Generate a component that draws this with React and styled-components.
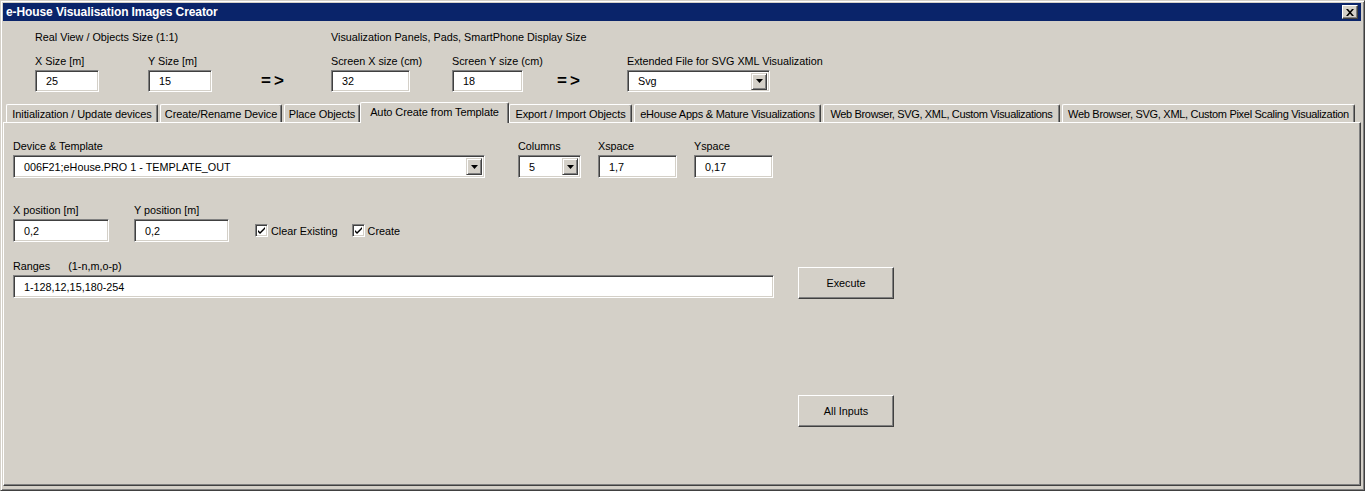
import React from 'react';
import styled, { createGlobalStyle } from 'styled-components';

const Global = createGlobalStyle`
	html, body {
		margin: 0;
		padding: 0;
		background: #d4d0c8;
	}
	body {
		font-family: "Liberation Sans", Arial, sans-serif;
		font-size: 10.8px;
		color: #000;
	}
`;

const Window = styled.div`
	width: 1365px;
	height: 491px;
	box-sizing: border-box;
	background: #d4d0c8;
	border: 1px solid;
	border-color: #d4d0c8 #404040 #404040 #d4d0c8;
	box-shadow: inset 1px 1px #fff, inset -1px -1px #808080;
	padding: 2px 3px 4px 2px;
	display: flex;
	flex-direction: column;
`;

const TitleBar = styled.div`
	height: 18px;
	background: #0a246a;
	display: flex;
	align-items: center;
	justify-content: space-between;
	padding: 0 3px 0 3px;
`;

const Title = styled.span`
	color: #fff;
	font-weight: bold;
	font-size: 12px;
	letter-spacing: -0.1px;
`;

const CloseBtn = styled.button`
	width: 16px;
	height: 14px;
	padding: 0;
	background: #d4d0c8;
	border: 1px solid;
	border-color: #fff #404040 #404040 #fff;
	box-shadow: inset -1px -1px #808080;
	display: flex;
	align-items: center;
	justify-content: center;
`;

const Header = styled.div`
	display: grid;
	grid-template-columns: 113px 113px 70px 121px 105px 70px auto;
	padding: 9px 0 0 32px;
`;

const Caption = styled.div`
	grid-column: ${p => p.span};
	height: 14px;
	line-height: 14px;
	margin-bottom: 10px;
`;

const Field = styled.div`
	display: flex;
	flex-direction: column;
`;

const Label = styled.label`
	height: 14px;
	line-height: 14px;
	margin-bottom: 2px;
	white-space: pre;
`;

const Input = styled.div`
	width: ${p => p.w}px;
	height: ${p => p.h || 22}px;
	box-sizing: border-box;
	background: #fff;
	border: 1px solid;
	border-color: #808080 #fff #fff #808080;
	box-shadow: inset 1px 1px #404040, inset -1px -1px #d4d0c8;
	padding-left: 10px;
	display: flex;
	align-items: center;
	white-space: nowrap;
`;

const Arrow = styled.div`
	align-self: end;
	font-size: 17px;
	font-weight: bold;
	letter-spacing: 3px;
	line-height: 22px;
	padding-top: 2px;
`;

const Select = styled(Input)`
	justify-content: space-between;
	padding-right: 2px;
`;

const DropBtn = styled.span`
	width: 16px;
	height: 17px;
	box-sizing: border-box;
	background: #d4d0c8;
	border: 1px solid;
	border-color: #d4d0c8 #404040 #404040 #d4d0c8;
	box-shadow: inset 1px 1px #fff, inset -1px -1px #808080;
	display: flex;
	align-items: center;
	justify-content: center;
`;

const Tabs = styled.div`
	display: flex;
	align-items: flex-end;
	gap: 2px;
	padding-left: 3px;
	margin-top: 9px;
	height: 21px;
	position: relative;
	z-index: 1;
`;

const Tab = styled.div`
	width: ${p => p.w}px;
	height: ${p => (p.active ? 21 : 18)}px;
	box-sizing: border-box;
	margin: ${p => (p.active ? '0 -2px -1px -2px' : '0')};
	padding-bottom: ${p => (p.active ? 3 : 0)}px;
	background: #d4d0c8;
	border-top: 1px solid #fff;
	border-left: 1px solid #fff;
	border-right: 1px solid #404040;
	box-shadow: inset -1px 0 #808080;
	border-radius: 2px 2px 0 0;
	display: flex;
	align-items: center;
	justify-content: center;
	white-space: nowrap;
	font-size: 11px;
	letter-spacing: ${p => p.ls}px;
`;

const Page = styled.div`
	flex: 1;
	border: 1px solid;
	border-color: #fff #404040 #404040 #fff;
	box-shadow: inset -1px -1px #808080;
	display: grid;
	grid-template-columns: 761px 96px;
	column-gap: 24px;
	padding: 16px 0 0 9px;
	align-content: start;
`;

const Form = styled.div`
	display: flex;
	flex-direction: column;
`;

const Row = styled.div`
	display: flex;
	align-items: flex-end;
	margin-top: ${p => p.mt || 0}px;
`;

const Spaced = styled.div`
	margin-left: ${p => p.ml}px;
`;

const Check = styled.label`
	display: flex;
	align-items: center;
	gap: 3px;
	height: 23px;
	margin-left: ${p => p.ml}px;
`;

const Box = styled.span`
	width: 13px;
	height: 13px;
	box-sizing: border-box;
	background: #fff;
	border: 1px solid;
	border-color: #808080 #fff #fff #808080;
	box-shadow: inset 1px 1px #404040, inset -1px -1px #d4d0c8;
	display: flex;
	align-items: center;
	justify-content: center;
`;

const Buttons = styled.div`
	display: flex;
	flex-direction: column;
	gap: 96px;
	padding-top: 128px;
`;

const Button = styled.button`
	width: 96px;
	height: 32px;
	background: #d4d0c8;
	font-family: inherit;
	font-size: 10.8px;
	color: #000;
	border: 1px solid;
	border-color: #fff #404040 #404040 #fff;
	box-shadow: inset -1px -1px #808080;
	padding: 0;
`;

const Triangle = () => (
	<svg width="7" height="4" viewBox="0 0 7 4">
		<path d="M0 0h7L3.5 4z" fill="#000" />
	</svg>
);

const Tick = () => (
	<svg width="9" height="9" viewBox="0 0 9 9">
		<path d="M1 4l2 2 5-5v2L3 8 1 6z" fill="#000" />
	</svg>
);

const tabs = [
	['Initialization / Update devices', 152, -0.1],
	['Create/Rename Device', 122, -0.1],
	['Place Objects', 76, -0.1],
	['Auto Create from Template', 149, -0.1, true],
	['Export / Import Objects', 123, -0.1],
	['eHouse Apps & Mature Visualizations', 187, -0.25],
	['Web Browser, SVG, XML, Custom Visualizations', 237, -0.35],
	['Web Browser, SVG, XML, Custom Pixel Scaling Visualization', 293, -0.3],
];

const App = () => (
	<>
		<Global />
		<Window>
			<TitleBar>
				<Title>e-House Visualisation Images Creator</Title>
				<CloseBtn>
					<svg width="8" height="7" viewBox="0 0 8 7">
						<path d="M0 0h2l2 2.3L6 0h2L5 3.5 8 7H6L4 4.7 2 7H0l3-3.5z" fill="#000" />
					</svg>
				</CloseBtn>
			</TitleBar>

			<Header>
				<Caption span="1 / 4">Real View / Objects Size (1:1)</Caption>
				<Caption span="4 / 8">Visualization Panels, Pads, SmartPhone Display Size</Caption>
				<Field>
					<Label>X Size [m]</Label>
					<Input w={64}>25</Input>
				</Field>
				<Field>
					<Label>Y Size [m]</Label>
					<Input w={64}>15</Input>
				</Field>
				<Arrow>=&gt;</Arrow>
				<Field>
					<Label>Screen X size (cm)</Label>
					<Input w={79}>32</Input>
				</Field>
				<Field>
					<Label>Screen Y size (cm)</Label>
					<Input w={71}>18</Input>
				</Field>
				<Arrow>=&gt;</Arrow>
				<Field>
					<Label>Extended File for SVG XML Visualization</Label>
					<Select w={143} h={22}>Svg<DropBtn><Triangle /></DropBtn></Select>
				</Field>
			</Header>

			<Tabs>
				{tabs.map(([name, w, ls, active]) => (
					<Tab key={name} w={w} ls={ls} active={active}>{name}</Tab>
				))}
			</Tabs>

			<Page>
				<Form>
					<Row>
						<Field>
							<Label>Device &amp; Template</Label>
							<Select w={472} h={23}>006F21;eHouse.PRO 1 - TEMPLATE_OUT<DropBtn><Triangle /></DropBtn></Select>
						</Field>
						<Spaced ml={33}>
							<Field>
								<Label>Columns</Label>
								<Select w={63} h={23}>5<DropBtn><Triangle /></DropBtn></Select>
							</Field>
						</Spaced>
						<Spaced ml={17}>
							<Field>
								<Label>Xspace</Label>
								<Input w={79} h={23}>1,7</Input>
							</Field>
						</Spaced>
						<Spaced ml={17}>
							<Field>
								<Label>Yspace</Label>
								<Input w={79} h={23}>0,17</Input>
							</Field>
						</Spaced>
					</Row>
					<Row mt={25}>
						<Field>
							<Label>X position [m]</Label>
							<Input w={96} h={23}>0,2</Input>
						</Field>
						<Spaced ml={25}>
							<Field>
								<Label>Y position [m]</Label>
								<Input w={95} h={23}>0,2</Input>
							</Field>
						</Spaced>
						<Check ml={26}><Box><Tick /></Box>Clear Existing</Check>
						<Check ml={14}><Box><Tick /></Box>Create</Check>
					</Row>
					<Row mt={17}>
						<Field>
							<Label>{'Ranges      (1-n,m,o-p)'}</Label>
							<Input w={761} h={23}>1-128,12,15,180-254</Input>
						</Field>
					</Row>
				</Form>
				<Buttons>
					<Button>Execute</Button>
					<Button>All Inputs</Button>
				</Buttons>
			</Page>
		</Window>
	</>
);

export default App;
